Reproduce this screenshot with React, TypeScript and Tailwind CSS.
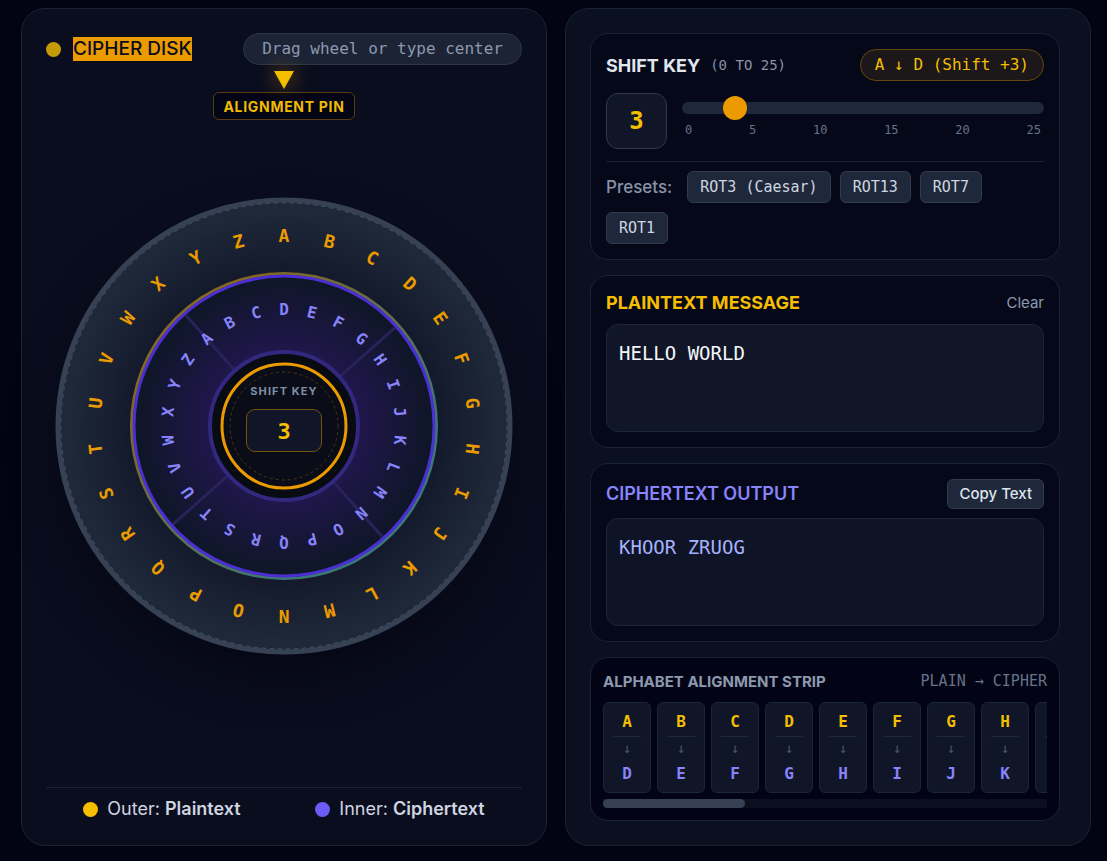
import React, { useState } from 'react';

const ALPHABET = 'ABCDEFGHIJKLMNOPQRSTUVWXYZ'.split('');
const STEP = 360 / 26;

const presets = [
  { label: 'ROT3 (Caesar)', shift: 3 },
  { label: 'ROT13', shift: 13 },
  { label: 'ROT7', shift: 7 },
  { label: 'ROT1', shift: 1 },
];

const shiftLetter = (letter: string, shift: number) =>
  ALPHABET[(ALPHABET.indexOf(letter) + shift) % 26];

const encrypt = (text: string, shift: number) =>
  text.toUpperCase().replace(/[A-Z]/g, (letter) => shiftLetter(letter, shift));

const parseShift = (value: string) => {
  const n = parseInt(value.replace(/\D/g, ''), 10);
  return Number.isNaN(n) ? 0 : Math.min(25, n);
};

interface LetterRingProps {
  radius: number;
  className: string;
}

const LetterRing: React.FC<LetterRingProps> = ({ radius, className }) => (
  <g className={className} textAnchor="middle">
    {ALPHABET.map((letter, index) => (
      <text key={letter} y={-radius} dy="0.36em" transform={`rotate(${index * STEP})`}>
        {letter}
      </text>
    ))}
  </g>
);

interface ShiftProps {
  shift: number;
  onShift: (shift: number) => void;
}

const CipherDisk: React.FC<ShiftProps> = ({ shift, onShift }) => (
  <div className="grid place-items-center">
    <svg
      viewBox="-229 -229 458 458"
      className="col-start-1 row-start-1 w-full max-w-[458px] rounded-full shadow-[0_25px_50px_rgba(0,0,10,0.4)]"
    >
      <defs>
        <radialGradient id="outerFill" gradientUnits="userSpaceOnUse" cx="0" cy="0" r="226">
          <stop offset="0.65" stopColor="#121829" />
          <stop offset="0.95" stopColor="#1e2839" />
        </radialGradient>
        <radialGradient id="innerFill" gradientUnits="userSpaceOnUse" cx="0" cy="0" r="150">
          <stop offset="0.45" stopColor="#22164f" />
          <stop offset="0.95" stopColor="#10162a" />
        </radialGradient>
        <linearGradient id="rim" x1="0" y1="0" x2="1" y2="1">
          <stop offset="0.2" stopColor="#83681f" />
          <stop offset="0.75" stopColor="#3b7678" />
        </linearGradient>
      </defs>

      <circle r="226" fill="url(#outerFill)" stroke="#364154" strokeWidth="5" />
      <circle r="223" fill="none" stroke="#465264" strokeWidth="1" strokeDasharray="4 4" />
      <LetterRing radius={190} className="fill-[#eb9b00] font-['DejaVu_Sans_Mono',monospace] text-[18px] font-bold" />

      <circle r="152.5" fill="url(#innerFill)" stroke="url(#rim)" strokeWidth="3" />
      <circle r="150" fill="none" stroke="#4c2fd2" strokeWidth="3" />
      <g transform={`rotate(${-shift * STEP})`}>
        <path d="M0-148V-75M0 148V75M-148 0H-75M148 0H75" stroke="#28225a" strokeWidth="3" />
        <LetterRing radius={117} className="fill-[#8884fb] font-['DejaVu_Sans_Mono',monospace] text-[16px] font-bold" />
      </g>

      <circle r="74" fill="#080b12" stroke="#33287f" strokeWidth="4" />
      <circle r="62" fill="#0a0d17" stroke="#eb9b00" strokeWidth="3" />
      <circle r="54" fill="none" stroke="#4b3614" strokeWidth="1" strokeDasharray="3 3" />
    </svg>
    <label className="col-start-1 row-start-1 flex flex-col items-center gap-2.5 pb-[18px]">
      <span className="text-[11px] leading-4 font-bold tracking-widest text-[#8090a6]">SHIFT KEY</span>
      <input
        type="text"
        inputMode="numeric"
        value={shift}
        onChange={(e) => onShift(parseShift(e.target.value))}
        className="h-[43px] w-[76px] rounded-[9px] border border-[#76520f] bg-[#101628] pt-0.5 text-center font-['DejaVu_Sans_Mono',monospace] text-[22px] font-bold text-[#f5bf00] outline-none"
      />
    </label>
  </div>
);

const DiskPanel: React.FC<ShiftProps> = ({ shift, onShift }) => (
  <section className="flex min-w-0 flex-col rounded-3xl border border-[#1b2233] bg-[#0a0d1e] p-6">
    <div className="flex items-center justify-between">
      <div className="flex items-center gap-3">
        <span className="size-[15px] rounded-full bg-[#c49b06]" />
        <h2 className="bg-[#eb9b00] text-[19px] leading-6 font-medium text-[#0a0d1e]">CIPHER DISK</h2>
      </div>
      <span className="flex h-8 items-center rounded-full border border-[#2b3547] bg-[#1b2335] px-[18px] font-['DejaVu_Sans_Mono',monospace] text-[16px] text-[#8d99ae]">
        Drag wheel or type center
      </span>
    </div>

    <div className="relative flex grow flex-col justify-center">
      <CipherDisk shift={shift} onShift={onShift} />
      <div className="absolute inset-x-0 top-1.5 flex flex-col items-center gap-[3px]">
        <svg viewBox="0 0 20 18" className="h-[18px] w-5 drop-shadow-[0_0_10px_rgba(245,160,0,0.6)]">
          <path d="M0 0h20L10 18z" fill="#f5bf00" />
        </svg>
        <span className="flex h-7 items-center rounded-md border border-[#5a3c10] bg-[#030414] px-[9px] text-[14px] font-bold tracking-wider text-[#f0bb00]">
          ALIGNMENT PIN
        </span>
      </div>
    </div>

    <div className="flex justify-around border-t border-[#1b2233] pt-[9px] text-[18px] leading-6 text-[#ced5e0]">
      <div className="flex items-center gap-[9px]">
        <span className="size-[15px] rounded-full bg-[#f5bf00]" />
        <span>Outer: <strong className="font-semibold">Plaintext</strong></span>
      </div>
      <div className="flex items-center gap-[9px]">
        <span className="size-[15px] rounded-full bg-[#6a5cf5]" />
        <span>Inner: <strong className="font-semibold">Ciphertext</strong></span>
      </div>
    </div>
  </section>
);

const ShiftCard: React.FC<ShiftProps> = ({ shift, onShift }) => (
  <div className="rounded-[18px] border border-[#1b2233] bg-[#050819] p-[15px]">
    <div className="flex items-center justify-between">
      <h2 className="flex items-center gap-2.5 text-[18px] font-bold text-[#e1e6ee]">
        SHIFT KEY
        <span className="font-['DejaVu_Sans_Mono',monospace] text-[14px] font-normal text-[#8794a9]">(0 TO 25)</span>
      </h2>
      <span className="flex h-8 items-center rounded-full border border-[#65450f] bg-[#1c1719] px-3.5 font-['DejaVu_Sans_Mono',monospace] text-[16px] whitespace-pre text-[#f5bf00]">
        A ↓ {shiftLetter('A', shift)} (Shift +{shift})
      </span>
    </div>

    <div className="mt-3 flex items-center gap-[15px]">
      <input
        type="text"
        inputMode="numeric"
        aria-label="Shift key"
        value={shift}
        onChange={(e) => onShift(parseShift(e.target.value))}
        className="h-14 w-[61px] rounded-xl border border-[#2e394b] bg-[#101628] text-center font-['DejaVu_Sans_Mono',monospace] text-[24px] font-bold text-[#f5bf00] outline-none"
      />
      <div className="min-w-0 grow">
        <input
          type="range"
          min={0}
          max={25}
          aria-label="Shift amount"
          value={shift}
          onChange={(e) => onShift(Number(e.target.value))}
          className="block h-3 w-full appearance-none rounded-full bg-[#1f283a] [&::-webkit-slider-thumb]:size-6 [&::-webkit-slider-thumb]:appearance-none [&::-webkit-slider-thumb]:rounded-full [&::-webkit-slider-thumb]:bg-[#eb9b00]"
        />
        <div className="mt-1.5 flex justify-between px-[3px] font-['DejaVu_Sans_Mono',monospace] text-[12px] leading-5 text-[#66738a]">
          {[0, 5, 10, 15, 20, 25].map((tick) => (
            <span key={tick}>{tick}</span>
          ))}
        </div>
      </div>
    </div>

    <div className="mt-3 flex flex-wrap items-center gap-[9px] border-t border-[#1b2233] pt-[9px]">
      <span className="mr-1.5 text-[17px] leading-6 font-medium text-[#8794a9]">Presets:</span>
      {presets.map((preset) => (
        <button
          key={preset.label}
          onClick={() => onShift(preset.shift)}
          className="h-8 rounded-md border border-[#303b4d] bg-[#1f283a] px-3 font-['DejaVu_Sans_Mono',monospace] text-[15px] text-[#ced5e0]"
        >
          {preset.label}
        </button>
      ))}
    </div>
  </div>
);

const AlignmentStrip: React.FC<{ shift: number }> = ({ shift }) => {
  const [scroll, setScroll] = useState(0);

  const handleScroll = (e: React.UIEvent<HTMLDivElement>) => {
    setScroll(e.currentTarget.scrollLeft / e.currentTarget.scrollWidth);
  };

  return (
    <div className="min-w-0 rounded-[18px] border border-[#1b2233] bg-[#020416] p-3">
      <div className="flex items-center justify-between">
        <h2 className="text-[15px] leading-[23px] font-bold text-[#8d99ae]">ALPHABET ALIGNMENT STRIP</h2>
        <span className="font-['DejaVu_Sans_Mono',monospace] text-[15px] leading-[23px] text-[#66738a]">
          PLAIN → CIPHER
        </span>
      </div>
      <div
        onScroll={handleScroll}
        className="mt-[9px] flex gap-1.5 overflow-x-auto font-['DejaVu_Sans_Mono',monospace] text-[16px] leading-6 font-bold [scrollbar-width:none]"
      >
        {ALPHABET.map((letter) => (
          <div
            key={letter}
            className="flex w-12 shrink-0 flex-col items-center rounded-md border border-[#1b2536] bg-[#101628] px-[9px] pt-[7px] pb-1.5 text-center"
          >
            <span className="w-full border-b border-[#1f2939] pb-0.5 text-[#f5bf00]">{letter}</span>
            <span className="text-[14px] leading-[22px] font-normal text-[#4a566a]">↓</span>
            <span className="pt-[3px] text-[#8884fb]">{shiftLetter(letter, shift)}</span>
          </div>
        ))}
      </div>
      <div className="mt-1.5 h-[9px] overflow-hidden bg-[#0a0e1f]">
        <div
          className="h-full w-[32%] rounded-full bg-[#364154]"
          style={{ marginLeft: `${scroll * 100}%` }}
        />
      </div>
    </div>
  );
};

const App: React.FC = () => {
  const [shift, setShift] = useState(3);
  const [message, setMessage] = useState('HELLO WORLD');
  const output = encrypt(message, shift);

  return (
    <main className="grid min-h-screen grid-cols-2 gap-[18px] bg-[#020413] pt-2 pr-4 pb-[15px] pl-[21px] font-[Inter,sans-serif]">
      <DiskPanel shift={shift} onShift={setShift} />

      <section className="flex min-w-0 flex-col gap-[15px] rounded-3xl border border-[#1b2233] bg-[#0b1021] py-6 pr-[30px] pl-6">
        <ShiftCard shift={shift} onShift={setShift} />

        <div className="rounded-[18px] border border-[#1b2233] bg-[#050819] p-[15px]">
          <div className="flex items-center justify-between">
            <label htmlFor="plaintext" className="text-[18px] leading-6 font-bold text-[#f5bf00]">
              PLAINTEXT MESSAGE
            </label>
            <button onClick={() => setMessage('')} className="text-[15px] leading-6 text-[#8d99ae]">
              Clear
            </button>
          </div>
          <textarea
            id="plaintext"
            value={message}
            onChange={(e) => setMessage(e.target.value.toUpperCase())}
            className="mt-[9px] block h-[108px] w-full resize-none rounded-xl border border-[#1b2536] bg-[#101628] px-3 py-[15px] font-['DejaVu_Sans_Mono',monospace] text-[19px] leading-[26px] text-[#f4f6fa] outline-none"
          />
        </div>

        <div className="rounded-[18px] border border-[#1b2233] bg-[#050819] p-[15px]">
          <div className="flex items-center justify-between">
            <label htmlFor="ciphertext" className="text-[18px] leading-6 font-semibold text-[#8884fb]">
              CIPHERTEXT OUTPUT
            </label>
            <button
              onClick={() => navigator.clipboard.writeText(output)}
              className="h-[30px] rounded-md border border-[#303b4d] bg-[#1f283a] px-[11px] text-[15px] font-medium text-[#dfe4ec]"
            >
              Copy Text
            </button>
          </div>
          <textarea
            id="ciphertext"
            readOnly
            value={output}
            className="mt-[9px] block h-[108px] w-full resize-none rounded-xl border border-[#1b2536] bg-[#0e1325] px-3 py-[15px] font-['DejaVu_Sans_Mono',monospace] text-[19px] leading-[26px] text-[#a5b0fb] outline-none"
          />
        </div>

        <AlignmentStrip shift={shift} />
      </section>
    </main>
  );
};

export default App;
